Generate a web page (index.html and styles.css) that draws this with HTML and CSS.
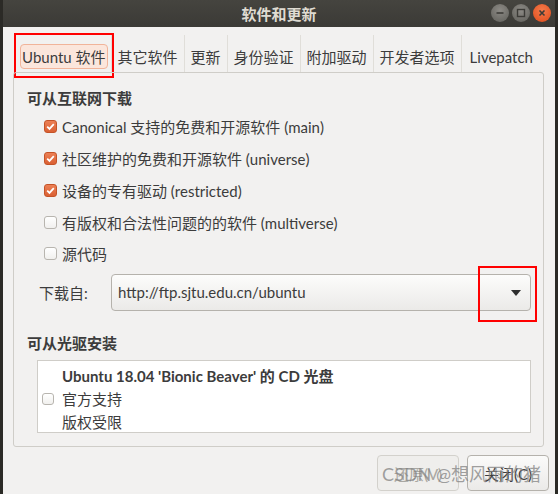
FILE: index.html
```html
<!DOCTYPE html>
<html lang="zh">
<head>
<meta charset="utf-8">
<title>软件和更新</title>
<link rel="stylesheet" href="styles.css">
</head>
<body>
<div class="window">
  <div class="titlebar">
    <span class="title">软件和更新</span>
    <div class="controls">
      <span class="wbtn"><svg width="16" height="16" viewBox="0 0 16 16"><line x1="4.5" y1="8" x2="11.5" y2="8" stroke="#3c3b37" stroke-width="1.6"/></svg></span>
      <span class="wbtn"><svg width="16" height="16" viewBox="0 0 16 16"><rect x="4.5" y="4.5" width="7" height="7" fill="none" stroke="#3c3b37" stroke-width="1.4"/></svg></span>
      <span class="wbtn close"><svg width="16" height="16" viewBox="0 0 16 16"><path d="M5.5 5.5 L10.5 10.5 M10.5 5.5 L5.5 10.5" stroke="#3c3b37" stroke-width="1.6"/></svg></span>
    </div>
  </div>
  <div class="content">
    <div class="tabs">
      <div class="tab active"><span class="focus">Ubuntu 软件</span></div>
      <div class="tab">其它软件</div>
      <div class="tab">更新</div>
      <div class="tab">身份验证</div>
      <div class="tab">附加驱动</div>
      <div class="tab">开发者选项</div>
      <div class="tab last">Livepatch</div>
      <div class="mark mark-tab"></div>
    </div>
    <div class="frame">
      <div class="heading">可从互联网下载</div>
      <div class="checks">
        <div class="row"><span class="cb checked"><svg width="13" height="13" viewBox="0 0 13 13"><path d="M3.2 6.6 L5.5 8.9 L9.8 4.2" fill="none" stroke="#fff" stroke-width="1.8"/></svg></span>Canonical 支持的免费和开源软件 (main)</div>
        <div class="row"><span class="cb checked"><svg width="13" height="13" viewBox="0 0 13 13"><path d="M3.2 6.6 L5.5 8.9 L9.8 4.2" fill="none" stroke="#fff" stroke-width="1.8"/></svg></span>社区维护的免费和开源软件 (universe)</div>
        <div class="row"><span class="cb checked"><svg width="13" height="13" viewBox="0 0 13 13"><path d="M3.2 6.6 L5.5 8.9 L9.8 4.2" fill="none" stroke="#fff" stroke-width="1.8"/></svg></span>设备的专有驱动 (restricted)</div>
        <div class="row"><span class="cb"></span>有版权和合法性问题的的软件 (multiverse)</div>
        <div class="row"><span class="cb"></span>源代码</div>
      </div>
      <div class="source">
        <span class="src-label">下载自:</span>
        <div class="combo">
          <span>http://ftp.sjtu.edu.cn/ubuntu</span>
          <svg class="arrow" width="10" height="6" viewBox="0 0 10 6"><path d="M0 0 H10 L5 6 Z" fill="#2e2e2e"/></svg>
          <div class="mark mark-arrow"></div>
        </div>
      </div>
      <div class="heading cd-heading">可从光驱安装</div>
      <div class="cdbox">
        <span class="cb cd-cb"></span>
        <div class="cdtext">
          <div class="cdtitle">Ubuntu 18.04 'Bionic Beaver' 的 CD 光盘</div>
          <div>官方支持</div>
          <div>版权受限</div>
        </div>
      </div>
    </div>
    <div class="buttons">
      <div class="btn disabled">还原(V)</div>
      <div class="btn">关闭(C)</div>
      <div class="watermark">CSDN @想风雨的猪</div>
    </div>
  </div>
</div>
</body>
</html>
```
FILE: styles.css
```css
html, body {
  margin: 0;
  padding: 0;
}
body {
  background: #2b2a26;
  width: 558px;
  height: 494px;
  overflow: hidden;
  font-family: "Lato", "Noto Sans CJK SC", sans-serif;
  font-size: 15px;
  color: #3c3c3c;
}
.window {
  margin: 0 3px;
  width: 552px;
  height: 494px;
  background: #f2f1f0;
  display: flex;
  flex-direction: column;
}
.titlebar {
  height: 27px;
  flex: none;
  background: linear-gradient(#45443f, #3b3a36);
  position: relative;
  display: flex;
  align-items: center;
  justify-content: center;
}
.title {
  color: #dfdbd2;
  font-weight: bold;
  font-size: 15px;
  font-family: "Noto Sans CJK SC", sans-serif;
}
.controls {
  position: absolute;
  right: 4px;
  top: 4px;
  display: flex;
  gap: 3px;
}
.wbtn {
  width: 18px;
  height: 18px;
  border-radius: 50%;
  background: radial-gradient(circle at 50% 35%, #8c8a85, #5f5e59);
  display: flex;
  align-items: center;
  justify-content: center;
}
.wbtn.close {
  background: radial-gradient(circle at 50% 35%, #f47a4a, #df4b1b);
}
.content {
  flex: 1;
  display: flex;
  flex-direction: column;
  position: relative;
}
.tabs {
  display: flex;
  align-items: stretch;
  height: 45px;
  padding-left: 11px;
  box-sizing: border-box;
  position: relative;
}
.tab {
  display: flex;
  align-items: center;
  padding: 6px 6px 0 6px;
  border-right: 1px solid #e0ded9;
  color: #3c3c3c;
  white-space: nowrap;
  margin-top: 8px;
}
.tab.active {
  padding-right: 3px;
}
.tab.last {
  border-right: none;
  padding-left: 8px;
}
.focus {
  background: #fbe6dc;
  border: 1px solid #f1b49a;
  border-radius: 4px;
  padding: 1px 1px;
}
.mark {
  position: absolute;
  border: 2px solid #ff0000;
  box-sizing: border-box;
}
.mark-tab {
  left: 11px;
  top: 6px;
  width: 100px;
  height: 45px;
}
.frame {
  margin: 0 11px 0 10px;
  border: 1px solid #cfcdc8;
  border-radius: 3px;
  height: 375px;
  box-sizing: border-box;
  padding: 14px 12px 0 13px;
  position: relative;
}
.heading {
  font-weight: bold;
  font-family: "Noto Sans CJK SC", sans-serif;
  height: 22px;
  line-height: 22px;
}
.checks {
  padding-left: 17px;
  margin-top: 2px;
}
.row {
  display: flex;
  align-items: center;
  height: 31.75px;
  gap: 5px;
}
.cb {
  width: 13px;
  height: 13px;
  box-sizing: border-box;
  border: 1px solid #b8b5af;
  border-radius: 3px;
  background: linear-gradient(#ffffff, #f1f0ee);
  flex: none;
  display: flex;
}
.cb.checked {
  border-color: #c45327;
  background: linear-gradient(#ec8055, #da6033);
}
.cb.checked svg {
  margin: -1px;
}
.source {
  display: flex;
  align-items: center;
  margin-top: 4px;
  padding-left: 12px;
}
.src-label {
  width: 72px;
}
.combo {
  flex: 1;
  height: 37px;
  box-sizing: border-box;
  border: 1px solid #b5b2ac;
  border-radius: 4px;
  background: linear-gradient(#fcfcfb, #ebeae8);
  display: flex;
  align-items: center;
  justify-content: space-between;
  padding: 0 9px 0 6px;
  position: relative;
  color: #3c3c3c;
}
.arrow {
  margin-top: 1px;
}
.mark-arrow {
  right: -7px;
  top: -9px;
  width: 59px;
  height: 56px;
}
.cd-heading {
  margin-top: 21px;
}
.cdbox {
  margin: 6px 0 0 10px;
  height: 73px;
  box-sizing: border-box;
  background: #ffffff;
  border: 1px solid #cfcdc8;
  display: flex;
  align-items: flex-start;
  padding: 4px 0 0 4px;
  gap: 8px;
}
.cd-cb {
  width: 12px;
  height: 12px;
  margin-top: 28px;
}
.cdtext {
  display: flex;
  flex-direction: column;
  line-height: 23px;
}
.cdtitle {
  font-weight: bold;
}
.buttons {
  display: flex;
  justify-content: flex-end;
  gap: 8px;
  padding: 8px 6px 0 0;
  position: relative;
}
.btn {
  width: 82px;
  height: 36px;
  box-sizing: border-box;
  border: 1px solid #b5b2ac;
  border-radius: 4px;
  background: linear-gradient(#fbfbfa, #ebeae8);
  display: flex;
  align-items: center;
  justify-content: center;
  color: #3c3c3c;
}
.btn.disabled {
  color: #a9a7a2;
  border-color: #d3d1cc;
  background: #efeeec;
}
.watermark {
  position: absolute;
  right: 14px;
  top: 13px;
  font-size: 18px;
  color: rgba(130, 130, 130, 0.75);
  white-space: nowrap;
}
```
